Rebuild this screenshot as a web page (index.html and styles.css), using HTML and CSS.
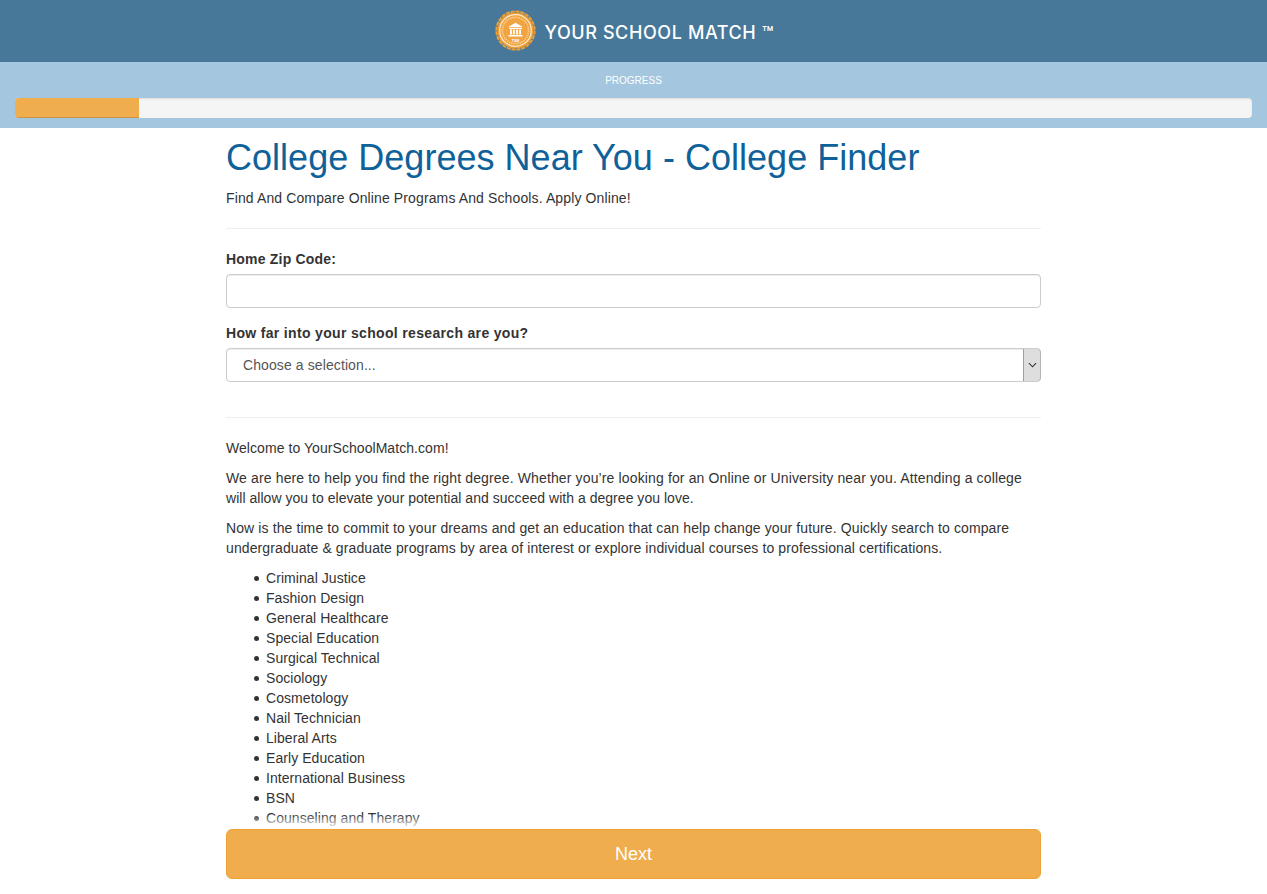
FILE: index.html
```html
<!DOCTYPE html>
<html lang="en">
<head>
<meta charset="utf-8">
<title>Your School Match</title>
<link rel="stylesheet" href="styles.css">
</head>
<body>
<header class="brand-bar">
  <svg class="logo" viewBox="0 0 42 42" width="41" height="41" aria-hidden="true">
    <circle cx="21" cy="21" r="18.5" fill="#ef9f38"/>
    <circle cx="21" cy="21" r="19.6" fill="none" stroke="#ef9f38" stroke-width="2" stroke-dasharray="4.2 0.9"/>
    <circle cx="21" cy="21" r="16.2" fill="none" stroke="#fdeccf" stroke-width="1.2"/>
    <circle cx="21" cy="21" r="13.4" fill="none" stroke="#f7cd94" stroke-width="2" stroke-dasharray="1.4 0.8"/>
    <circle cx="21" cy="21" r="11.5" fill="#f0a542"/>
    <path d="M13.5 17.5 21 13 28.5 17.5Z" fill="#fff"/>
    <path d="M14.5 18.3h13v1.1h-13zM15.4 20h1.9v5.2h-1.9zM18.4 20h1.9v5.2h-1.9zM21.7 20h1.9v5.2h-1.9zM24.7 20h1.9v5.2h-1.9zM13.8 25.6h14.4v1.6H13.8z" fill="#fff"/>
    <text class="logo-text" x="21" y="33.2" text-anchor="middle">TSM</text>
  </svg>
  <span class="brand-name">YOUR SCHOOL MATCH <span class="tm">™</span></span>
</header>
<section class="progress-band">
  <div class="progress-label">PROGRESS</div>
  <div class="progress-track"><div class="progress-fill" style="width:10%"></div></div>
</section>
<main class="container">
  <h1 class="title">College Degrees Near You - College Finder</h1>
  <p class="lead">Find And Compare Online Programs And Schools. Apply Online!</p>
  <hr class="rule rule-top">
  <form class="form">
    <div class="field">
      <label class="field-label label-short" for="zip">Home Zip Code:</label>
      <input class="control" id="zip" type="text">
    </div>
    <div class="field">
      <label class="field-label" for="stage">How far into your school research are you?</label>
      <div class="select-wrap">
        <div class="control select-value" id="stage">Choose a selection...</div>
        <span class="select-arrow">
          <svg viewBox="0 0 10 6" width="9" height="6" aria-hidden="true"><path d="M1 1l4 4 4-4" fill="none" stroke="#333" stroke-width="1.2"/></svg>
        </span>
      </div>
    </div>
  </form>
  <hr class="rule rule-bottom">
  <div class="copy">
    <p class="welcome">Welcome to YourSchoolMatch.com!</p>
    <p class="intro"><span class="intro-first">We are here to help you find the right degree. Whether you’re looking for an Online or University near you. Attending a college</span> will allow you to elevate your potential and succeed with a degree you love.</p>
    <p class="commit">Now is the time to commit to your dreams and get an education that can help change your future. Quickly search to compare undergraduate &amp; graduate programs by area of interest or explore individual courses to professional certifications.</p>
    <ul class="list">
      <li>Criminal Justice</li>
      <li>Fashion Design</li>
      <li>General Healthcare</li>
      <li>Special Education</li>
      <li>Surgical Technical</li>
      <li>Sociology</li>
      <li>Cosmetology</li>
      <li>Nail Technician</li>
      <li>Liberal Arts</li>
      <li>Early Education</li>
      <li>International Business</li>
      <li>BSN</li>
      <li>Counseling and Therapy</li>
      <li>Medical Assistant</li>
    </ul>
  </div>
</main>
<footer class="action-bar">
  <div class="action-fade"></div>
  <div class="action-solid"><button class="next" type="button">Next</button></div>
</footer>
</body>
</html>
```
FILE: styles.css
```css
* { box-sizing: border-box; }
html, body { height: 100%; overflow: hidden; }
body {
  margin: 0;
  background: #fff;
  color: #333;
  font-family: "Liberation Sans", Arial, sans-serif;
  font-size: 14px;
  line-height: 20px;
}
.brand-bar {
  height: 62px;
  background: #47789a;
  display: flex;
  align-items: center;
  justify-content: center;
  gap: 8px;
  padding-left: 2px;
}
.logo { display: block; margin-top: -1px; }
.logo-text { font-size: 3.6px; font-weight: 700; fill: #fff; }
.brand-name {
  color: #fff;
  font-family: Inter, "Liberation Sans", sans-serif;
  font-size: 18px;
  font-weight: 500;
  letter-spacing: 0.6px;
  padding-top: 3px;
}
.tm { font-size: 19px; letter-spacing: 0; line-height: 1; vertical-align: -1px; }
.progress-band {
  height: 66px;
  background: #a4c7df;
  padding: 8px 15px 0;
}
.progress-label {
  color: #fff;
  font-size: 10px;
  line-height: 20px;
  padding-top: 1px;
  margin-bottom: -1px;
  text-align: center;
}
.progress-track {
  height: 20px;
  margin-top: 8px;
  background: #f5f5f5;
  border-radius: 4px;
  overflow: hidden;
  box-shadow: inset 0 1px 2px rgba(0,0,0,.1);
}
.progress-fill {
  height: 100%;
  background: #f0ad4e;
  box-shadow: inset 0 -1px 0 rgba(0,0,0,.15);
}
.container {
  width: 815px;
  margin: 0 auto;
}
.title {
  margin: 10px 0 10px;
  color: #0f6199;
  font-size: 36px;
  font-weight: 400;
  line-height: 39.6px;
  letter-spacing: 0.025px;
}
.lead { margin: 0; color: #333; letter-spacing: 0.12px; }
.rule { border: 0; border-top: 1px solid #eee; margin: 0; }
.rule-top { margin-top: 20px; margin-bottom: 20px; }
.rule-bottom { margin-top: 35px; margin-bottom: 20px; }
.field { margin-bottom: 15px; }
.field-label {
  display: block;
  margin-bottom: 5px;
  font-weight: 700;
  height: 20px;
  letter-spacing: 0.33px;
}
.label-short { letter-spacing: 0.2px; }
.control {
  display: block;
  width: 100%;
  height: 34px;
  padding: 6px 12px;
  border: 1px solid #ccc;
  border-radius: 4px;
  background: #fff;
  box-shadow: inset 0 1px 1px rgba(0,0,0,.075);
  font: inherit;
  color: #555;
}
.select-wrap { position: relative; }
.select-value { padding-left: 16px; letter-spacing: 0.1px; }
.select-arrow {
  position: absolute;
  top: 1px;
  right: 0;
  width: 18px;
  height: 32px;
  background: #dedede;
  border-left: 1px solid #a0a0a0;
  border-right: 1px solid #b4b4b4;
  border-radius: 0 4px 4px 0;
  display: flex;
  align-items: center;
  justify-content: center;
}
.copy p { margin: 0 0 10px; }
.welcome { letter-spacing: 0.06px; }
.intro { letter-spacing: 0.03px; }
.intro-first { letter-spacing: 0.135px; }
.commit { letter-spacing: 0.105px; }
.list { margin: 0; padding-left: 40px; list-style: none; letter-spacing: 0.06px; }
.list li { position: relative; }
.list li::before {
  content: "";
  position: absolute;
  left: -12px;
  top: 8px;
  width: 5px;
  height: 5px;
  border-radius: 50%;
  background: #333;
}
.action-bar {
  position: fixed;
  left: 0;
  right: 0;
  bottom: 0;
}
.action-fade {
  height: 15px;
  background: linear-gradient(rgba(255,255,255,0), #fff);
}
.action-solid {
  background: #fff;
  padding-bottom: 15px;
  display: flex;
  justify-content: center;
}
.next {
  width: 815px;
  height: 50px;
  border: 1px solid #eea236;
  border-radius: 6px;
  background: #f0ad4e;
  color: #fff;
  font: inherit;
  font-size: 18px;
}
```
